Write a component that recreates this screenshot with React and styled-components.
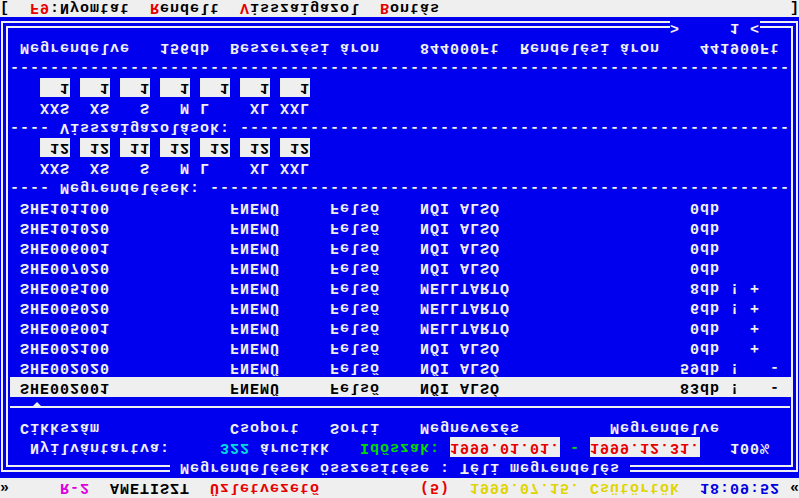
import React from "react"
import styled, { createGlobalStyle } from "styled-components"

// The whole screen is photographed upside down (mirrored top to bottom),
// so it is laid out in its normal order and flipped by the Screen.

const GREY = "#efefef"
const BLUE = "#0000ee"
const INK = "#f0f0f0"

const GlobalStyle = createGlobalStyle`
  html, body {
    margin: 0;
    padding: 0;
    background: ${BLUE};
    overflow: hidden;
  }
`

const Screen = styled.div`
  width: 799px;
  height: 498px;
  display: flex;
  flex-direction: column;
  background: ${BLUE};
  transform: scaleY(-1);
  font-family: "Liberation Mono", "DejaVu Sans Mono", monospace;
  font-weight: bold;
  font-size: 15px;
  letter-spacing: 1px;
  line-height: 20px;
  overflow: hidden;
`

const Bar = styled.div`
  display: grid;
  grid-template-columns: repeat(80, 10px);
  grid-template-rows: 20px;
  height: ${p => p.$h}px;
  padding-top: ${p => p.$pad || 0}px;
  box-sizing: border-box;
  background: ${GREY};
  color: #000;
  overflow: hidden;
  flex: none;
`

const Desk = styled.main`
  flex: 1;
  display: flex;
  flex-direction: column;
  padding: 6px 1px 4px 1px;
`

const Frame = styled.section`
  position: relative;
  flex: 1;
  display: flex;
  border: 2px solid ${INK};
  padding: 3px;
`

const Inner = styled.div`
  flex: 1;
  display: flex;
  flex-direction: column;
  border: 2px solid ${INK};
  padding: 8px 0 9px 2px;
  color: ${INK};
`

const Title = styled.div`
  position: absolute;
  top: -7px;
  left: 167px;
  height: 20px;
  background: ${BLUE};
  color: ${INK};
  white-space: pre;
`

const PageMark = styled.div`
  position: absolute;
  top: 433px;
  left: 667px;
  height: 20px;
  background: ${BLUE};
  color: ${INK};
  white-space: pre;
`

const Line = styled.div`
  display: grid;
  grid-template-columns: repeat(78, 10px);
  grid-template-rows: 20px;
  height: 20px;
  color: ${p => (p.$selected ? "#000" : INK)};
  background: ${p => (p.$selected ? GREY : "transparent")};
`

const Text = styled.span`
  grid-column: ${p => p.$col} / span ${p => p.$span};
  grid-row: 1;
  white-space: pre;
  color: ${p => p.$color || "inherit"};
`

const Field = styled.span`
  grid-column: ${p => p.$col} / span ${p => p.$span};
  grid-row: 1;
  height: ${p => p.$h || 20}px;
  background: ${GREY};
  color: ${p => p.$color || "#000"};
  text-align: ${p => p.$align || "right"};
  white-space: pre;
`

const Separator = styled.div`
  height: 20px;
  padding-top: 9px;
  box-sizing: border-box;
`

const Rule = styled.div`
  position: relative;
  width: 780px;
  height: 2px;
  background: ${INK};
`

const Caret = styled.span`
  position: absolute;
  left: 23px;
  top: 2px;
  border-left: 4px solid transparent;
  border-right: 4px solid transparent;
  border-top: 4px solid ${INK};
`

const T = ({ c, color, children }) => (
  <Text $col={c} $span={String(children).length} $color={color}>
    {children}
  </Text>
)

// bars start at screen column 0
const BT = ({ c, color, children }) => (
  <Text $col={c + 1} $span={String(children).length} $color={color}>
    {children}
  </Text>
)

const sizes = ["XXS", "XS", "S", "M", "L", "XL", "XXL"]
const labelCols = [4, 9, 14, 18, 20, 25, 28]
const boxCols = [4, 8, 12, 16, 20, 24, 28]
const ordered = ["1", "1", "1", "1", "1", "1", "1"]
const confirmed = ["12", "12", "11", "12", "12", "12", "12"]

const items = [
  { code: "SHE101100", name: "NŐI ALSÓ", qty: "0db" },
  { code: "SHE101020", name: "NŐI ALSÓ", qty: "0db" },
  { code: "SHE006001", name: "NŐI ALSÓ", qty: "0db" },
  { code: "SHE007020", name: "NŐI ALSÓ", qty: "0db" },
  { code: "SHE005100", name: "MELLTARTÓ", qty: "8db", flag: "!", sign: "+" },
  { code: "SHE005020", name: "MELLTARTÓ", qty: "6db", flag: "!", sign: "+" },
  { code: "SHE005001", name: "MELLTARTÓ", qty: "0db", sign: "+" },
  { code: "SHE002100", name: "NŐI ALSÓ", qty: "0db", sign: "+" },
  { code: "SHE002020", name: "NŐI ALSÓ", qty: "59db", flag: "!", sign: "-" },
  { code: "SHE002001", name: "NŐI ALSÓ", qty: "83db", flag: "!", sign: "-", selected: true },
]

const SizeLabels = () => (
  <Line>
    {sizes.map((s, i) => (
      <T key={s} c={labelCols[i]}>{s}</T>
    ))}
  </Line>
)

const SizeBoxes = ({ values }) => (
  <Line>
    {values.map((v, i) => (
      <Field key={i} $col={boxCols[i]} $span={3} $h={19}>{v}</Field>
    ))}
  </Line>
)

const ItemRow = ({ item }) => (
  <Line $selected={item.selected}>
    <T c={2}>{item.code}</T>
    <T c={23}>FNEMŰ</T>
    <T c={33}>Felső</T>
    <T c={42}>{item.name}</T>
    <T c={72 - item.qty.length}>{item.qty}</T>
    {item.flag && <T c={73}>{item.flag}</T>}
    {item.sign === "+" && <T c={75}>+</T>}
    {item.sign === "-" && <T c={77}>-</T>}
  </Line>
)

export default function App() {
  return (
    <>
      <GlobalStyle />
      <Screen>
        <Bar $h={20} $pad={1}>
          <BT c={0}>»</BT>
          <BT c={6} color="#e000e0">R-2</BT>
          <BT c={11}>AMETISZT</BT>
          <BT c={21} color="#e80000">Üzletvezető</BT>
          <BT c={42} color="#e80000">(5)</BT>
          <BT c={47} color="#e0d400">1999.07.15.</BT>
          <BT c={59} color="#e0d400">Csütörtök</BT>
          <BT c={70} color="#0000e0">18:09:52</BT>
          <BT c={79}>«</BT>
        </Bar>

        <Desk>
          <Frame>
            <Title>{" Megrendelések összesítése : Téli megrendelés "}</Title>
            <PageMark>{">     1 <"}</PageMark>
            <Inner>
              <Line>
                <T c={3}>Nyilvántartva:</T>
                <T c={22} color="#00dcdc">322</T>
                <T c={26}>árucikk</T>
                <T c={36} color="#00dc00">Időszak:</T>
                <Field $col={45} $span={11} $align="left" $color="#e80000">1999.01.01.</Field>
                <T c={57} color="#00dc00">-</T>
                <Field $col={59} $span={11} $align="left" $color="#e80000">1999.12.31.</Field>
                <T c={73}>100%</T>
              </Line>
              <Line>
                <T c={2}>Cikkszám</T>
                <T c={23}>Csoport</T>
                <T c={33}>Sorti</T>
                <T c={42}>Megnevezés</T>
                <T c={61}>Megrendelve</T>
              </Line>
              <Separator>
                <Rule>
                  <Caret />
                </Rule>
              </Separator>
              {[...items].reverse().map(item => (
                <ItemRow key={item.code} item={item} />
              ))}
              <Line>
                <T c={1}>----</T>
                <T c={6}>Megrendelések:</T>
                <T c={21}>{"-".repeat(58)}</T>
              </Line>
              <SizeLabels />
              <SizeBoxes values={confirmed} />
              <Line>
                <T c={1}>----</T>
                <T c={6}>Visszaigazolások:</T>
                <T c={24}>{"-".repeat(55)}</T>
              </Line>
              <SizeLabels />
              <SizeBoxes values={ordered} />
              <Line>
                <T c={1}>{"-".repeat(78)}</T>
              </Line>
              <Line>
                <T c={2}>Megrendelve</T>
                <T c={16}>156db</T>
                <T c={23}>Beszerzési áron</T>
                <T c={42}>844000Ft</T>
                <T c={52}>Rendelési áron</T>
                <T c={70}>441900Ft</T>
              </Line>
            </Inner>
          </Frame>
        </Desk>

        <Bar $h={17}>
          <BT c={0}>[</BT>
          <BT c={3} color="#e80000">F9</BT>
          <BT c={5}>:Nyomtat</BT>
          <BT c={15} color="#e80000">R</BT>
          <BT c={16}>endelt</BT>
          <BT c={24} color="#e80000">V</BT>
          <BT c={25}>isszaigazol</BT>
          <BT c={38} color="#e80000">B</BT>
          <BT c={39}>ontás</BT>
          <BT c={79}>]</BT>
        </Bar>
      </Screen>
    </>
  )
}
